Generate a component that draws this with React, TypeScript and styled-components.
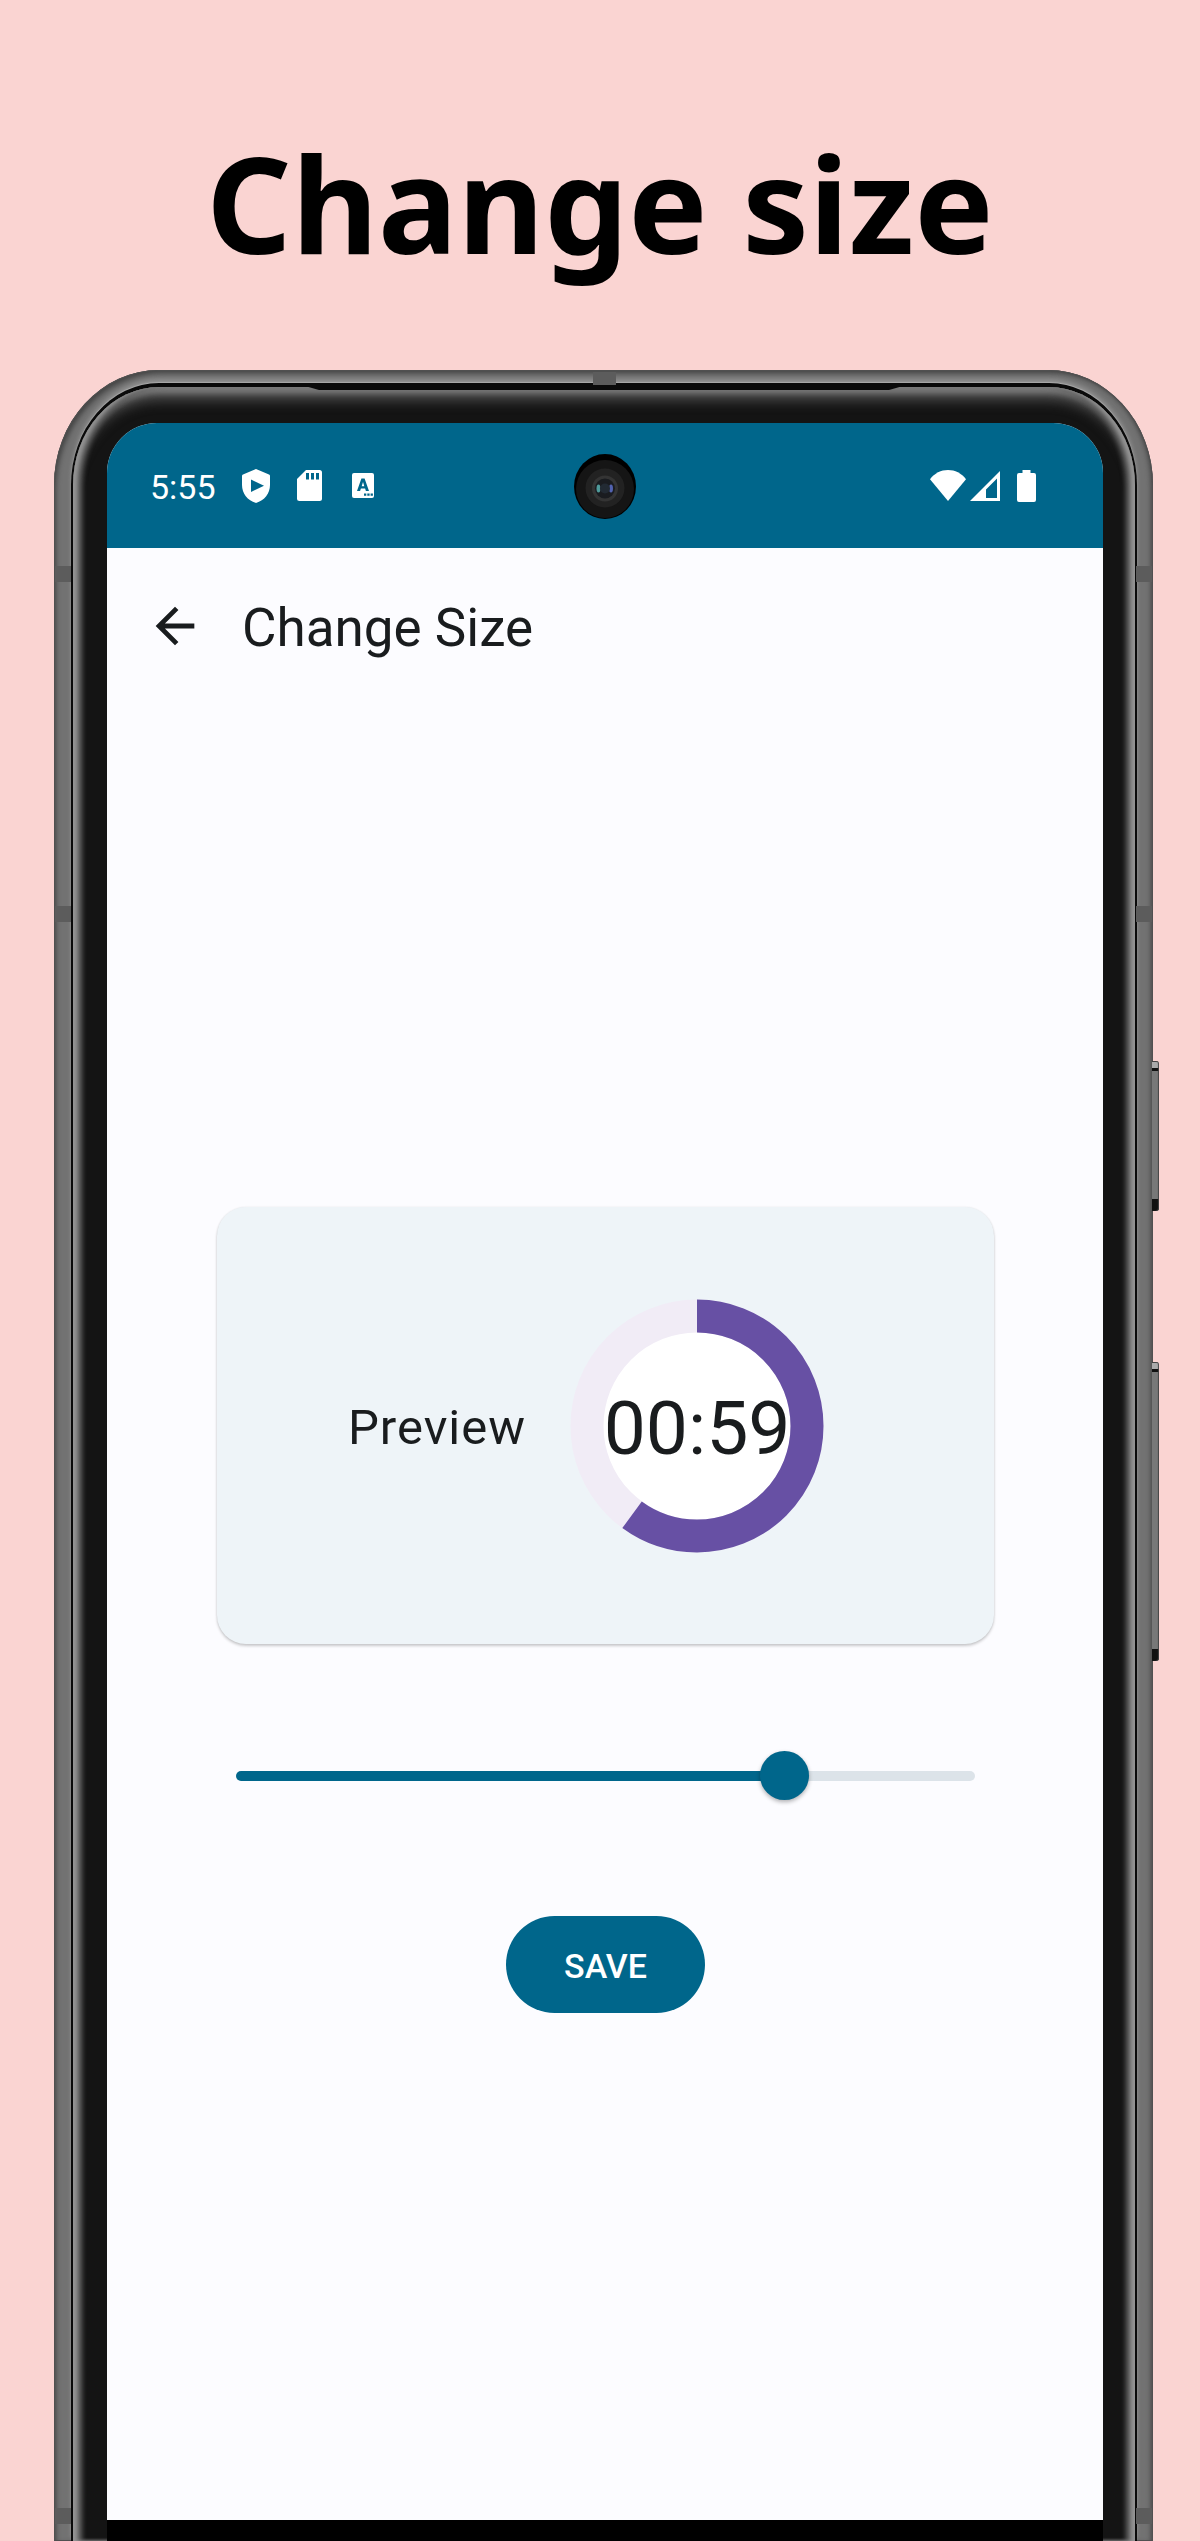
import React, { useState } from 'react';
import styled, { createGlobalStyle } from 'styled-components';

const GlobalStyle = createGlobalStyle`
  *, *::before, *::after { box-sizing: border-box; }
  body { margin: 0; background: #fad4d2; }
`;

const blue = '#00668b';
const ink = '#191c1e';

const Page = styled.div`
  min-height: 100vh;
  display: flex;
  flex-direction: column;
  overflow: hidden;
  background: #fad4d2;
  font-family: Roboto, 'Liberation Sans', sans-serif;
  color: ${ink};
`;

const Headline = styled.h1`
  margin: 0;
  padding: 112px 0 76px;
  font-family: 'Noto Sans', sans-serif;
  font-size: 133px;
  line-height: 182px;
  font-weight: 700;
  text-align: center;
  color: #000;
`;

const Phone = styled.div`
  position: relative;
  flex: 1;
  display: flex;
  margin: 0 47px 0 54px;
  padding: 13px 16px 0 17px;
  border-radius: 105px 105px 0 0 / 115px 115px 0 0;
  background: #727272;
  box-shadow: inset 0 0 0 1px #505050, inset 4px 5px 5px -2px #444, inset -4px 0 5px -2px #444;
`;

const Groove = styled.div`
  flex: 1;
  display: flex;
  padding: 4px 2px 0;
  border-radius: 88px 88px 0 0 / 102px 102px 0 0;
  background: #0a0a0a;
  box-shadow: 0 -1px 1px #aaa, 0 -4px 4px #909090;
`;

const Bevel = styled.div`
  position: relative;
  flex: 1;
  display: flex;
  padding: 36px 32px 0 34px;
  border-radius: 86px 86px 0 0 / 98px 98px 0 0;
  background: #141414;
  box-shadow:
    inset 6px 0 4px -1px #949494,
    inset -6px 0 4px -1px #949494,
    inset 11px 0 4px -1px #4c4c4c,
    inset -11px 0 4px -1px #4c4c4c,
    inset 0 7px 6px -1px #808080,
    inset 0 16px 12px -2px #484848;
`;

const SpeakerSlot = styled.div`
  position: absolute;
  top: -1px;
  left: 232px;
  right: 232px;
  height: 4px;
  background: #0a0a0a;
  clip-path: polygon(0 0, 100% 0, calc(100% - 14px) 100%, 14px 100%);
`;

const TopBand = styled.span`
  position: absolute;
  top: 2px;
  left: 49%;
  width: 23px;
  height: 13px;
  background: #5c5c5c;
`;

const SideBand = styled.span<{ $side: 'left' | 'right'; $top: number }>`
  position: absolute;
  top: ${(p) => p.$top}px;
  ${(p) => p.$side}: 1px;
  width: 16px;
  height: 16px;
  background: #5c5c5c;
`;

const SideButton = styled.span<{ $top: number; $length: number }>`
  position: absolute;
  top: ${(p) => p.$top}px;
  right: -6px;
  width: 7px;
  height: ${(p) => p.$length}px;
  border-radius: 0 3px 3px 0;
  background: linear-gradient(
    to bottom,
    #444 0 1px, #aaa 1px 7px, #111 7px 10px, #787878 10px calc(100% - 12px), #111 calc(100% - 12px)
  );
  box-shadow: inset -1px 0 1px #444;
`;

const Screen = styled.div`
  flex: 1;
  min-width: 0;
  display: flex;
  flex-direction: column;
  overflow: hidden;
  border-radius: 50px 50px 0 0;
  background: #fcfcff;
`;

const StatusBar = styled.div`
  position: relative;
  display: flex;
  align-items: center;
  justify-content: space-between;
  height: 125px;
  padding: 0 67px 0 43px;
  background: ${blue};
  color: #fff;
`;

const StatusGroup = styled.div`
  display: flex;
  align-items: center;
`;

const Clock = styled.span`
  margin-right: 26px;
  padding-top: 2px;
  font-size: 34px;
  line-height: 40px;
`;

const Glyph = styled.svg<{ $gap?: number }>`
  display: block;
  flex: none;
  margin-right: ${(p) => p.$gap ?? 0}px;
`;

const Camera = styled.svg`
  position: absolute;
  top: 31px;
  left: 50%;
  margin-left: -31px;
`;

const AppBar = styled.header`
  display: flex;
  align-items: center;
  gap: 38px;
  height: 156px;
  padding: 0 39px;
`;

const BackButton = styled.button`
  display: block;
  padding: 0;
  border: 0;
  background: none;
  color: ${ink};
  cursor: pointer;
`;

const Title = styled.h2`
  margin: 0;
  padding-top: 4px;
  font-size: 53px;
  line-height: 64px;
  font-weight: 400;
`;

const Main = styled.main`
  flex: 1;
  display: flex;
  flex-direction: column;
  align-items: center;
  justify-content: center;
  padding: 0 109px 4px 110px;
`;

const PreviewCard = styled.section`
  width: 100%;
  height: 437px;
  display: flex;
  align-items: center;
  justify-content: center;
  border-radius: 29px;
  background: #eef4f8;
  box-shadow: 0 2px 3px rgba(0, 0, 0, 0.2), 0 0 2px rgba(0, 0, 0, 0.08);
`;

const PreviewLabel = styled.span`
  padding-top: 4px;
  font-size: 49px;
  line-height: 58px;
  letter-spacing: 1px;
`;

const Timer = styled.div`
  display: grid;
  place-items: center;
  padding: 0 39px 0 44px;

  > * { grid-area: 1 / 1; }
`;

const TimerText = styled.span`
  padding-top: 4px;
  font-size: 75px;
  line-height: 88px;
`;

const Slider = styled.input`
  appearance: none;
  display: block;
  width: calc(100% - 38px);
  height: 49px;
  margin: 107px 0 116px;
  background: transparent;
  cursor: pointer;

  &::-webkit-slider-runnable-track {
    height: 10px;
    border-radius: 5px;
    background: linear-gradient(to right, ${blue} var(--fill), #dce3e9 var(--fill));
  }

  &::-webkit-slider-thumb {
    appearance: none;
    width: 49px;
    height: 49px;
    margin-top: -20px;
    border-radius: 50%;
    background: ${blue};
    box-shadow: 0 2px 4px rgba(0, 0, 0, 0.3);
  }
`;

const SaveButton = styled.button`
  height: 97px;
  padding: 2px 58px 0;
  border: 0;
  border-radius: 49px;
  background: ${blue};
  color: #fff;
  font-family: inherit;
  font-size: 34px;
  line-height: 40px;
  font-weight: 500;
  cursor: pointer;
`;

const NavArea = styled.div`
  height: 21px;
  background: #000;
`;

const PROGRESS = 0.6;
const RING_RADIUS = 110;
const RING_LENGTH = 2 * Math.PI * RING_RADIUS;

function Ring() {
  return (
    <svg width="254" height="254" viewBox="0 0 254 254" aria-hidden="true">
      <circle cx="127" cy="127" r={RING_RADIUS} fill="#fff" stroke="#f1ecf6" strokeWidth="33" />
      <circle
        cx="127"
        cy="127"
        r={RING_RADIUS}
        fill="none"
        stroke="#6750a4"
        strokeWidth="33"
        strokeDasharray={`${RING_LENGTH * PROGRESS} ${RING_LENGTH}`}
        transform="rotate(-90 127 127)"
      />
    </svg>
  );
}

function StatusIcons() {
  return (
    <StatusGroup>
      <Clock>5:55</Clock>
      <Glyph $gap={27} width="28" height="34" viewBox="0 0 28 34">
        <path fill="#fff" d="M14 0 27 5.4Q28 5.8 28 7V16C28 24.5 22.500 31.500 14 34 5.500 31.500 0 24.500 0 16V7Q0 5.800 1 5.400Z" />
        <path fill={blue} d="M9 10.500V23L22 16.700Z" />
      </Glyph>
      <Glyph $gap={30} width="25" height="31" viewBox="0 0 25 31">
        <path fill="#fff" d="M9 0H22.500Q25 0 25 2.500V28.500Q25 31 22.500 31H2.500Q0 31 0 28.500V9Z" />
        <path fill={blue} d="M9 3h3v6.500H9zM14 3h3v6.500h-3zM19 3h3v6.500h-3z" />
      </Glyph>
      <Glyph width="22" height="25" viewBox="0 0 22 25">
        <rect width="22" height="25" rx="2" fill="#fff" />
        <path
          fill={blue}
          fillRule="evenodd"
          d="M9.400 5.500h3.200L17 18h-3.100l-.8-2.500H8.900L8.100 18H5ZM11 9 9.700 13.200h2.600Z"
        />
        <path fill={blue} d="M12 20.500h2.300v2.300H12zM15.300 20.500h2.300v2.300h-2.300zM18.600 20.500h2.300v2.300h-2.300z" />
      </Glyph>
    </StatusGroup>
  );
}

function SystemIcons() {
  return (
    <StatusGroup>
      <Glyph $gap={4} width="36" height="31" viewBox="0 0 36 31">
        <path fill="#fff" d="M18 31 0 9.200C4.500 3.200 11 0 18 0S31.500 3.200 36 9.200Z" />
      </Glyph>
      <Glyph $gap={17} width="30" height="30" viewBox="0 0 30 30">
        <path fill="#fff" fillRule="evenodd" d="M30 0V30H0ZM27 7.500 16 18.500V27H27Z" />
      </Glyph>
      <Glyph width="19" height="32" viewBox="0 0 19 32">
        <path fill="#fff" d="M5.500 0h8v3h3.500q2 0 2 2v25q0 2-2 2H2q-2 0-2-2V5q0-2 2-2h3.500z" />
      </Glyph>
    </StatusGroup>
  );
}

function CameraLens() {
  return (
    <Camera width="62" height="65" viewBox="0 0 62 65" aria-hidden="true">
      <ellipse cx="31" cy="32.500" rx="31" ry="32.500" fill="#000" />
      <circle cx="31" cy="35" r="29" fill="#151515" />
      <circle cx="31" cy="34" r="19.500" fill="#222" />
      <circle cx="31" cy="34.500" r="13" fill="#343434" />
      <circle cx="31" cy="34.500" r="10" fill="#1a1c20" />
      <ellipse cx="24.500" cy="34.500" rx="2" ry="4" fill="#4f9a9a" />
      <ellipse cx="37" cy="34.500" rx="2" ry="4" fill="#5262b0" />
      <circle cx="31" cy="34.500" r="5" fill="#222a33" />
    </Camera>
  );
}

export default function App() {
  const [size, setSize] = useState(76);

  return (
    <Page>
      <GlobalStyle />
      <Headline>Change size</Headline>
      <Phone>
        <SideButton $top={691} $length={150} />
        <SideButton $top={992} $length={299} />
        <Groove>
          <Bevel>
            <SpeakerSlot />
            <Screen>
              <StatusBar>
                <StatusIcons />
                <CameraLens />
                <SystemIcons />
              </StatusBar>
              <AppBar>
                <BackButton type="button" aria-label="Back">
                  <Glyph width="58" height="58" viewBox="0 0 24 24">
                    <path fill="currentColor" d="M20 11H7.830l5.590-5.590L12 4l-8 8 8 8 1.410-1.410L7.830 13H20v-2z" />
                  </Glyph>
                </BackButton>
                <Title>Change Size</Title>
              </AppBar>
              <Main>
                <PreviewCard>
                  <PreviewLabel>Preview</PreviewLabel>
                  <Timer>
                    <Ring />
                    <TimerText>00:59</TimerText>
                  </Timer>
                </PreviewCard>
                <Slider
                  type="range"
                  min={0}
                  max={100}
                  value={size}
                  aria-label="Size"
                  onChange={(e) => setSize(Number(e.target.value))}
                  style={{ '--fill': `${size}%` } as React.CSSProperties}
                />
                <SaveButton type="button">SAVE</SaveButton>
              </Main>
              <NavArea />
            </Screen>
          </Bevel>
        </Groove>
        <TopBand />
        {[196, 536, 2138].map((top) => (
          <React.Fragment key={top}>
            <SideBand $side="left" $top={top} />
            <SideBand $side="right" $top={top} />
          </React.Fragment>
        ))}
      </Phone>
    </Page>
  );
}
